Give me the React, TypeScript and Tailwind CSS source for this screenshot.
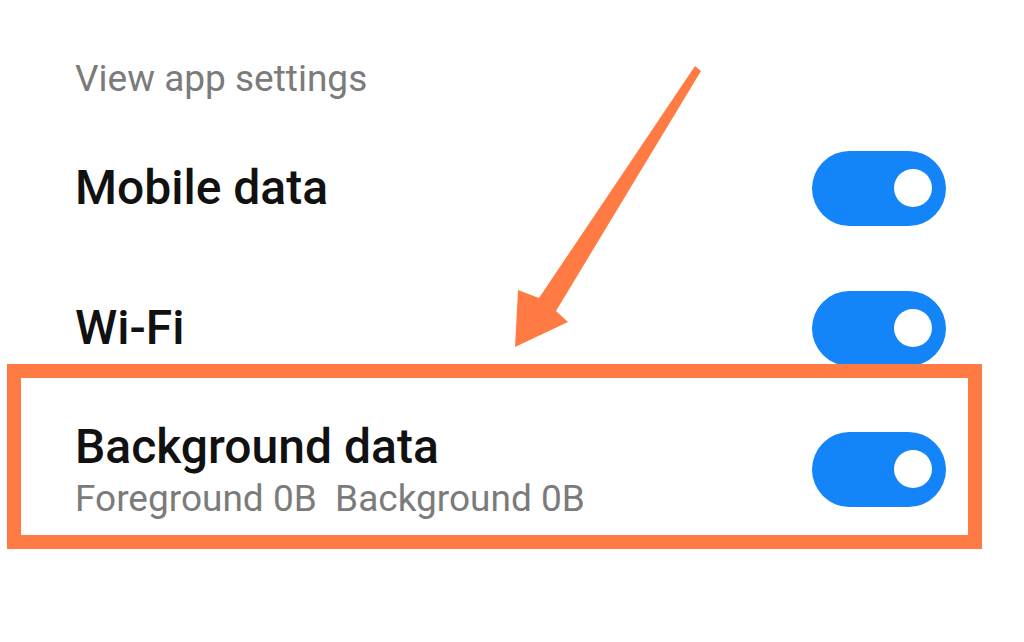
import React from 'react';

function Toggle() {
  return (
    <div className="flex h-[75px] w-[134px] shrink-0 items-center justify-end rounded-full bg-[#1485f8] pr-[14px]">
      <div className="h-[38px] w-[38px] rounded-full bg-white" />
    </div>
  );
}

export default function App() {
  return (
    <div className="relative h-[642px] w-[1024px] overflow-hidden bg-white font-['Roboto','Noto_Sans',sans-serif]">
      <div className="pl-[75px] pr-[78px] pt-[52px]">
        <div className="text-[37px] leading-[54px] text-[#7b7b7b]">View app settings</div>

        <div className="mt-[12px] flex h-[140px] items-center justify-between">
          <div className="text-[48px] font-medium leading-[48px] text-[#111]">Mobile data</div>
          <Toggle />
        </div>

        <div className="flex h-[140px] items-center justify-between">
          <div className="text-[48px] font-medium leading-[48px] text-[#111]">Wi-Fi</div>
          <Toggle />
        </div>

        <div className="flex h-[142px] items-center justify-between">
          <div className="flex flex-col pt-[4px]">
            <div className="text-[48px] font-medium leading-[48px] text-[#111]">Background data</div>
            <div className="mt-[7px] text-[37px] leading-[42px] text-[#7b7b7b]">Foreground 0B&nbsp;&nbsp;Background 0B</div>
          </div>
          <Toggle />
        </div>
      </div>

      {/* highlight box */}
      <div className="absolute left-[7px] top-[364px] h-[185px] w-[975px] border-[14px] border-[#ff7b43]" />

      {/* arrow */}
      <svg className="absolute left-0 top-0" width="1024" height="642" viewBox="0 0 1024 642">
        <path d="M695 66 L701 71 L556 311 L568 322 L515 347 L518 290 L539 298 Z" fill="#ff7b43" />
      </svg>
    </div>
  );
}
